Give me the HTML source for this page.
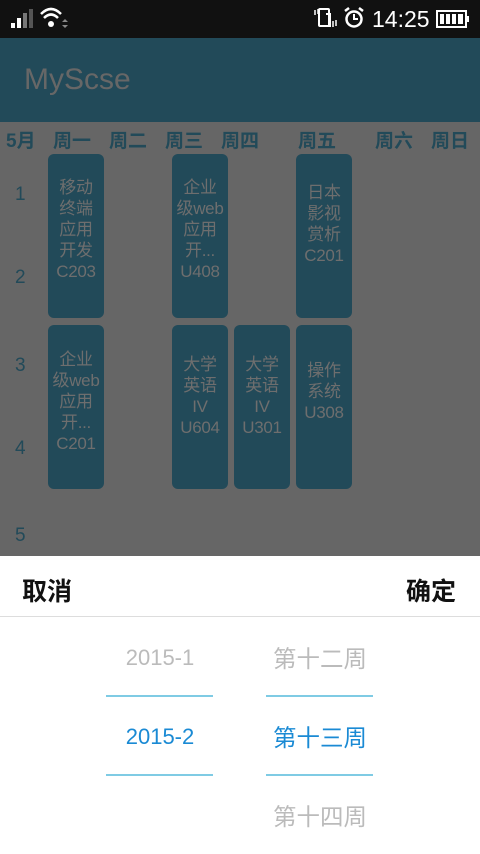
<!DOCTYPE html>
<html><head><meta charset="utf-8"><style>
*{margin:0;padding:0;box-sizing:border-box}
body{width:480px;height:854px;overflow:hidden;background:#666;font-family:"Liberation Sans","Noto Sans CJK SC",sans-serif;position:relative}
.sb{position:absolute;left:0;top:0;width:480px;height:38px;background:#111;color:#fff}
.bar{position:absolute;left:0;top:38px;width:480px;height:84px;background:#224a59}
.bar span{position:absolute;left:24px;top:25px;font-size:30px;color:#676767}
.hd{position:absolute;top:126px;font-size:19px;color:#224a59;font-weight:bold}
.num{position:absolute;left:15px;font-size:19px;color:#224a59}
.c{position:absolute;width:56px;height:164px;background:#224a59;border-radius:6px;color:#6e6e6e;font-size:17px;line-height:21px;text-align:center;display:flex;align-items:center;justify-content:center;flex-direction:column;letter-spacing:-0.3px}
.sheet{position:absolute;left:0;top:556px;width:480px;height:298px;background:#fff}
.btn{position:absolute;top:16px;font-size:25px;color:#111;font-weight:bold}
.div{position:absolute;left:0;top:60px;width:480px;height:1px;background:#ddd}
.ln{position:absolute;height:2px;background:#7fcbe4;width:107px}
.t{position:absolute;font-size:22px;width:160px;text-align:center}
.w{font-size:23.5px}
</style></head><body>
<div class="sb">
<svg width="480" height="38" style="position:absolute;left:0;top:0">
<rect x="11" y="23" width="4" height="5" fill="#fff"/><rect x="17" y="18" width="4" height="10" fill="#fff"/><rect x="23" y="13" width="4" height="15" fill="#777"/><rect x="29" y="9" width="4" height="19" fill="#555"/>
<path d="M41 14 Q51 4 61 14" stroke="#fff" stroke-width="2.5" fill="none"/><path d="M44 18 Q51 11 58 18" stroke="#fff" stroke-width="2.5" fill="none"/><circle cx="51" cy="24" r="3" fill="#fff"/>
<path d="M62 22 l3 -3 l3 3z M62 25 l3 3 l3 -3z" fill="#888"/>
<rect x="319" y="9" width="10" height="17" rx="1" stroke="#fff" stroke-width="2" fill="none"/>
<path d="M326 14h4v12h-6" stroke="#fff" stroke-width="2" fill="none"/>
<path d="M315 10v5 M318 9v5 M333 21v6 M336 20v6" stroke="#fff" stroke-width="1.5"/>
<circle cx="354" cy="19" r="7.5" stroke="#fff" stroke-width="2.5" fill="none"/><path d="M354 14v5h4" stroke="#fff" stroke-width="2" fill="none"/><path d="M345 11l4-3 M363 11l-4-3" stroke="#fff" stroke-width="2.5"/>
<rect x="437" y="11" width="29" height="16" stroke="#fff" stroke-width="2" fill="none"/><rect x="467" y="16" width="2" height="6" fill="#fff"/>
<g fill="#fff"><rect x="440" y="14" width="4" height="10"/><rect x="446" y="14" width="4" height="10"/><rect x="452" y="14" width="4" height="10"/><rect x="458" y="14" width="5" height="10"/></g>
</svg>
<span style="position:absolute;left:372px;top:6px;font-size:23px;color:#fff">14:25</span>
</div>
<div class="bar"><span>MyScse</span></div>
<div class="hd" style="left:6px">5月</div>
<div class="hd" style="left:53px">周一</div>
<div class="hd" style="left:109px">周二</div>
<div class="hd" style="left:165px">周三</div>
<div class="hd" style="left:221px">周四</div>
<div class="hd" style="left:298px">周五</div>
<div class="hd" style="left:375px">周六</div>
<div class="hd" style="left:431px">周日</div>
<div class="num" style="top:184px">1</div>
<div class="num" style="top:267px">2</div>
<div class="num" style="top:355px">3</div>
<div class="num" style="top:438px">4</div>
<div class="num" style="top:525px">5</div>
<div class="c" style="left:48px;top:154px;padding-bottom:14px">移动<br>终端<br>应用<br>开发<br>C203</div>
<div class="c" style="left:172px;top:154px;padding-bottom:14px">企业<br>级web<br>应用<br>开...<br>U408</div>
<div class="c" style="left:296px;top:154px;padding-bottom:24px">日本<br>影视<br>赏析<br>C201</div>
<div class="c" style="left:48px;top:325px;padding-bottom:12px">企业<br>级web<br>应用<br>开...<br>C201</div>
<div class="c" style="left:172px;top:325px;padding-bottom:22px">大学<br>英语<br>IV<br>U604</div>
<div class="c" style="left:234px;top:325px;padding-bottom:22px">大学<br>英语<br>IV<br>U301</div>
<div class="c" style="left:296px;top:325px;padding-bottom:32px">操作<br>系统<br>U308</div>
<div class="sheet">
<div class="btn" style="left:22px">取消</div>
<div class="btn" style="left:406px">确定</div>
<div class="div"></div>
<div class="ln" style="left:106px;top:139px"></div>
<div class="ln" style="left:266px;top:139px"></div>
<div class="ln" style="left:106px;top:218px"></div>
<div class="ln" style="left:266px;top:218px"></div>
<div class="t" style="left:80px;top:89px;color:#bbb">2015-1</div>
<div class="t w" style="left:240px;top:84px;color:#bbb">第十二周</div>
<div class="t" style="left:80px;top:168px;color:#1a8ad4">2015-2</div>
<div class="t w" style="left:240px;top:163px;color:#1a8ad4">第十三周</div>
<div class="t w" style="left:240px;top:242px;color:#bbb">第十四周</div>
</div>
</body></html>
